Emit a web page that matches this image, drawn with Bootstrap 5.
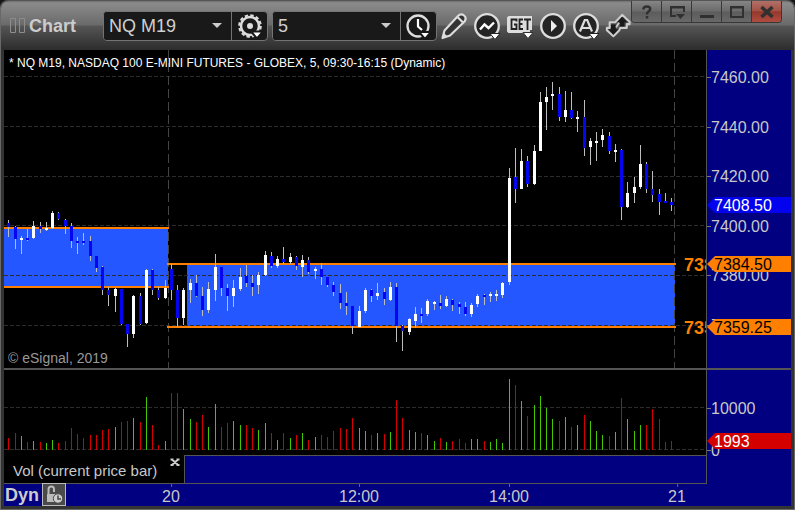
<!DOCTYPE html>
<html lang="en">
<head>
<meta charset="utf-8">
<meta name="viewport" content="width=device-width, initial-scale=1">
<title>Chart - NQ M19</title>
<link href="https://cdn.jsdelivr.net/npm/bootstrap@5.3.0/dist/css/bootstrap.min.css" rel="stylesheet">
<style>
  :root { --navy: #000080; --rule: #555; --axis: 85px; }
  html { background: #161616; }
  body { font-family: "Liberation Sans", Arial, sans-serif; font-size: 16px; line-height: 18px; color: #c8c8c8; background: #161616; }
  .app-window { background: #333; border: solid #686868; border-width: 0 1px 1px 1px; border-radius: 8px 8px 0 0; }
  .title-bar { height: 50px; padding-left: 9px; border-top: 1px solid #555; border-radius: 8px 8px 0 0;
    background: linear-gradient(#707070 0, #8b8b8b 2px, #6a6a6a 24px, #555 25px, #2e2e2e 48px); }
  .title-text { width: 73px; font-size: 18px; font-weight: bold; color: #ccc; padding-left: 3px; }
  .combo { height: 30px; border: 1px solid #747474; border-radius: 4px; background: #191919; }
  .combo .form-select { width: 127px; border: 0; border-radius: 3px 0 0 3px; padding: 0 24px 0 5px; font-size: 18px; line-height: 28px; color: #d0d0d0; background-color: #191919;
    background-image: url("data:image/svg+xml,%3Csvg xmlns='http://www.w3.org/2000/svg' viewBox='0 0 10 5'%3E%3Cpath d='M0 0h10L5 5z' fill='%23ccc'/%3E%3C/svg%3E");
    background-size: 10px 5px; background-position: right 9px center; }
  .combo .btn { width: 36px; border: 0; border-left: 1px solid #747474; border-radius: 0; }
  .tool { width: 33px; height: 30px; border: 0; }
  .tool-last { width: 29px; }
  .win-buttons { height: 22px; margin-right: 12px; border: 1px solid #383838; border-top: 0; border-radius: 0 0 4px 4px; overflow: hidden; }
  .win-buttons .btn { width: 30px; border: 0; border-right: 1px solid #383838; border-radius: 0; background: linear-gradient(#858585, #6b6b6b 48%, #5c5c5c 52%, #686868); }
  .win-buttons .btn:last-child { width: 29px; border-right: 0; background: linear-gradient(#b07068, #a55247 45%, #95382c 52%, #b04c40); }
  .frame-body { padding: 0 3px 3px; }
  .pane-price { flex: 318 1 0; min-height: 0; }
  .pane-volume { flex: 85 1 0; min-height: 0; }
  .plot { min-width: 0; background: #000; }
  .plot svg { position: absolute; inset: 0; width: 100%; height: 100%; }
  .axis { width: var(--axis); border-left: 1px solid var(--rule); background: var(--navy); }
  .splitter { height: 2px; background: #555; }
  .chart-title { top: 4px; left: 5px; font-size: 12px; color: #fff; }
  .copyright { left: 4px; bottom: 1px; font-size: 14px; color: #999; }
  .tick-label { left: 4px; transform: translateY(-50%); margin-top: 1px; }
  .tick-label::before { content: ""; position: absolute; left: -4px; top: 8px; width: 4px; height: 1px; background: #777; }
  .tag { left: 0; right: 0; height: 16px; padding-left: 7px; line-height: 17px; transform: translateY(-50%); clip-path: polygon(0 50%, 8px 0, 100% 0, 100% 100%, 8px 100%); }
  .tag-last { background: #0202ee; color: #fff; }
  .tag-level { background: #ff8000; color: #000; }
  .tag-volume { background: #d40000; color: #fff; }
  .level-label { right: 0; width: 22px; overflow: hidden; white-space: nowrap; font-size: 18px; font-weight: bold; color: #ff8000; transform: translateY(-50%); }
  .study-row { height: 28px; }
  .study-tab { width: 181px; padding: 0 4px 0 9px; font-size: 15px; background: #000; border-right: 1px solid var(--rule); }
  .study-tab .tab-close { width: 11px; height: 11px; margin-top: 2px; border: 0; }
  .study-space { border-top: 1px solid var(--rule); background: var(--navy); }
  .time-row { height: 23px; background: var(--navy); }
  .time-scale { border-top: 1px solid var(--rule); left: 0; right: 84px; top: 0; bottom: 0; }
  .time-label { top: 4px; transform: translateX(-50%); }
  .time-label::before { content: ""; position: absolute; left: 50%; top: -4px; width: 1px; height: 3px; background: #666; }
  .dyn { font-size: 18px; font-weight: bold; color: #ccc; padding: 3px 3px 0 1px; }
  .lock { width: 24px; height: 23px; border: 1px solid #bbb; border-radius: 0; background: #4a4a4a; }
  .btn svg { display: block; margin: auto; }
  .btn.tool-last svg { margin-right: 0; }
</style>
</head>
<body class="vh-100 overflow-hidden">
<div class="app-window d-flex flex-column h-100">
  <header class="title-bar d-flex align-items-center flex-shrink-0">
    <svg class="flex-shrink-0" width="16" height="16" fill="none" stroke="#8d8d8d" aria-hidden="true"><path d="M.5.5h5v14h-5zM9.500.5h5v14h-5z"/></svg>
    <div class="title-text flex-shrink-0 text-nowrap">Chart</div>
    <div class="combo d-flex flex-shrink-0 ms-1 me-1">
      <select class="form-select" aria-label="Symbol"><option>NQ M19</option></select>
      <button class="btn p-0" type="button" aria-label="Symbol settings">
        <svg width="28" height="28" viewBox="0 0 28 28"><circle cx="14" cy="14" r="9" fill="none" stroke="#ddd" stroke-width="2.500"/><circle cx="14" cy="14" r="10.800" fill="none" stroke="#ddd" stroke-width="2" stroke-dasharray="3.400 2.255"/><circle cx="14" cy="14" r="3" fill="#ddd"/><path d="M15 19.500h12l-6 7z" fill="#fff" stroke="#191919" stroke-width="2"/></svg>
      </button>
    </div>
    <div class="combo d-flex flex-shrink-0">
      <select class="form-select" aria-label="Interval"><option>5</option></select>
      <button class="btn p-0" type="button" aria-label="Time template">
        <svg width="28" height="28" viewBox="0 0 28 28"><circle cx="13" cy="14" r="10.500" fill="none" stroke="#ddd" stroke-width="2.300"/><path d="M13 7v7.500l4 3.500" fill="none" stroke="#fff" stroke-width="2.200"/><path d="M14 20h12l-6 7z" fill="#fff" stroke="#191919" stroke-width="2"/></svg>
      </button>
    </div>
    <div class="d-flex flex-shrink-0">
      <button class="tool btn p-0" type="button" aria-label="Draw">
        <svg width="28" height="28" viewBox="0 0 28 28"><path d="M2.500 26 4.500 18.500 18 4Q21 1 24 3.500T24.500 9.500L10 23.500zM17.500 5l5.500 5.500" fill="#333" stroke="#ddd" stroke-width="2.200" stroke-linejoin="round"/><path d="m2.500 26 1.500-5 3.500 3.500z" fill="#ddd"/></svg>
      </button>
      <button class="tool btn p-0" type="button" aria-label="Studies">
        <svg width="28" height="28" viewBox="0 0 28 28"><circle cx="14" cy="14" r="11.800" fill="#242424" stroke="#ddd" stroke-width="2.300"/><path d="m7 17.500 4.500-5 4 3.500 5.500-5.500" fill="none" stroke="#fff" stroke-width="2.400"/><path d="M17 21.500h10l-5 6z" fill="#fff" stroke="#222"/></svg>
      </button>
      <button class="tool btn p-0" type="button" aria-label="Get studies">
        <svg width="28" height="28" viewBox="0 0 28 28"><path d="M2.500 4H26v14h-2v2h-7v1H2.500L1 19.500v-14z" fill="#ddd"/><path d="M10.500 9.500V7.500H5.500v9.500h5V12.500H8M17 7.500H13.500v9.500H17M13.500 12h3M18 7.500h7M21.500 7.500V18" fill="none" stroke="#222" stroke-width="1.800"/><path d="M17 20.500h10l-5 6z" fill="#fff" stroke="#333"/></svg>
      </button>
      <button class="tool btn p-0" type="button" aria-label="Playback">
        <svg width="28" height="28" viewBox="0 0 28 28"><circle cx="14" cy="14" r="11.800" fill="#242424" stroke="#ddd" stroke-width="2.300"/><path d="M12 8v12l6-6z" fill="#eee"/></svg>
      </button>
      <button class="tool btn p-0" type="button" aria-label="Alerts">
        <svg width="28" height="28" viewBox="0 0 28 28"><circle cx="14" cy="14" r="11.800" fill="#242424" stroke="#ddd" stroke-width="2.300"/><path d="M8 19.500 12.800 8h2.400L20 19.500M10 16h8" fill="none" stroke="#ddd" stroke-width="2.200"/><path d="M17 21.500h10l-5 6z" fill="#fff" stroke="#222"/></svg>
      </button>
      <button class="tool tool-last btn p-0" type="button" aria-label="Link">
        <svg width="26" height="26" viewBox="0 1 28 28"><path d="M11.500 10.500 18.500 3 26.500 10.500V13H23.500V17H16.500L15.500 19.500 9 26 2 19.500V17H5V11H11z" fill="#555" stroke="#ccc" stroke-width="2.200" stroke-linejoin="round"/><path d="M18.500 5 24 11H21v4.500h-5V11h-3zM9 24.500 3.500 18.500h3v-5h5v5h3z" fill="#1a1a1a"/><path d="m12 16.500 3-5" fill="none" stroke="#ccc" stroke-width="2"/></svg>
      </button>
    </div>
    <div class="win-buttons d-flex flex-shrink-0 ms-auto align-self-start">
      <button class="btn p-0" type="button" aria-label="Help"><svg width="14" height="16" fill="none" stroke="#303030" stroke-width="2.500"><path d="M3.500 5.500V4.500Q4 2.500 7 2.500t3.200 2.500Q10.200 6.500 8.500 7.500T7 10.500M7 12v2.500"/></svg></button>
      <button class="btn p-0" type="button" aria-label="Window menu"><svg width="18" height="16" fill="none" stroke="#303030" stroke-width="2"><path d="M8 12H3V3h13v5M2 3.500h15"/><path d="M8 10h9l-4.500 5z" fill="#303030" stroke="none"/></svg></button>
      <button class="btn p-0" type="button" aria-label="Minimize"><svg width="16" height="16"><path d="M1 11h14v3H1z" fill="#303030"/></svg></button>
      <button class="btn p-0" type="button" aria-label="Maximize"><svg width="16" height="16" fill="none" stroke="#303030" stroke-width="2"><path d="M2 3h12v10H2zM1 3.500h14"/></svg></button>
      <button class="btn p-0" type="button" aria-label="Close"><svg width="16" height="16" stroke="#303030" stroke-width="3.500"><path d="m2.500 3 11 10M13.500 3l-11 10"/></svg></button>
    </div>
  </header>

  <main class="frame-body d-flex flex-column flex-grow-1">
    <section class="pane-price d-flex">
      <div class="plot flex-grow-1 position-relative overflow-hidden" id="pricePlot">
        <svg id="priceSvg" viewBox="4 50 702 318" preserveAspectRatio="none" shape-rendering="crispEdges" role="img" aria-label="NQ M19 five minute candles"></svg>
        <div class="chart-title position-absolute text-nowrap">* NQ M19, NASDAQ 100 E-MINI FUTURES - GLOBEX, 5, 09:30-16:15 (Dynamic)</div>
        <div class="copyright position-absolute">© eSignal, 2019</div>
      </div>
      <div class="axis flex-shrink-0 position-relative" id="priceAxis"></div>
    </section>
    <div class="splitter"></div>
    <section class="pane-volume d-flex">
      <div class="plot flex-grow-1 position-relative">
        <svg id="volumeSvg" viewBox="4 370 702 85" preserveAspectRatio="none" shape-rendering="crispEdges" role="img" aria-label="Volume"></svg>
      </div>
      <div class="axis flex-shrink-0 position-relative" id="volumeAxis"></div>
    </section>
    <div class="study-row d-flex flex-shrink-0">
      <div class="study-tab d-flex flex-shrink-0">
        <span class="align-self-center text-nowrap pt-1">Vol (current price bar)</span>
        <button class="tab-close btn p-0 ms-auto" type="button" aria-label="Remove study"><svg width="10" height="9" fill="none" stroke="#ccc" stroke-width="2"><path d="m2 1.500 6 5.500M8 1.500l-6 5.500M.5 1.500h3M6.500 1.500h3M.5 7h3M6.500 7h3"/></svg></button>
      </div>
      <div class="study-space flex-grow-1"></div>
      <div class="axis flex-shrink-0"></div>
    </div>
    <footer class="time-row d-flex flex-shrink-0 position-relative">
      <div class="time-scale position-absolute" id="timeScale"></div>
      <span class="dyn position-relative">Dyn</span>
      <button class="lock btn p-0 position-relative" type="button" aria-label="Lock time range"><svg width="20" height="20"><path d="M4.500 9V4.500q0-3 2.800-3T10 4.500V7" fill="none" stroke="#bbb" stroke-width="2"/><path d="M3 9h10v8H3z" fill="#bbb"/><circle cx="14" cy="13.500" r="4.700" fill="#ccc" stroke="#4a4a4a"/><path d="M14 10.500v3.500h3" fill="none" stroke="#444" stroke-width="1.500"/></svg></button>
    </footer>
  </main>
</div>

<script>
// Each bar: x, high, low, body top, body bottom, body colour (w = up, b = down)
const bars = `8 220 237 223 227 b;15 226 249 227 239 b;21 236 254 238 240 w;27 229 241 238 240 b;33 221 239 226 238 w;40 222 233 226 229 b;46 222 231 228 230 w;52 211 229 213 228 w;58 212 220 213 219 b;65 219 234 220 226 b;71 223 248 226 241 b;77 237 254 241 243 b;83 233 245 241 243 b;90 236 261 241 256 b;96 256 272 256 268 b;102 266 295 267 290 b;108 287 306 290 295 b;115 288 312 289 296 w;121 289 325 289 324 b;127 324 347 324 334 b;133 295 338 296 334 w;140 293 325 296 324 b;146 269 324 270 323 w;152 269 295 270 290 b;158 287 300 290 298 b;165 280 299 288 298 w;171 264 300 269 290 b;177 285 327 290 318 b;183 288 325 290 318 w;190 279 303 283 290 w;196 275 297 283 296 b;202 287 316 296 310 b;208 282 313 289 310 w;215 254 301 267 290 w;221 267 296 267 288 b;227 284 311 288 296 b;233 280 307 288 296 w;240 268 291 277 289 w;246 265 287 276 283 b;252 275 296 283 287 b;258 272 294 275 285 w;265 251 276 255 275 w;271 252 268 256 266 b;277 256 268 259 266 w;283 247 264 259 262 b;290 253 264 257 262 w;296 256 270 257 266 b;302 255 277 260 267 w;308 257 274 260 272 b;315 267 279 269 271 w;321 263 285 269 277 b;327 277 287 277 285 b;333 282 296 285 292 b;340 284 309 293 303 b;346 292 315 303 306 b;352 306 334 306 326 b;359 306 327 311 327 w;365 288 313 290 311 w;371 289 302 290 296 b;377 283 300 293 296 w;384 288 305 292 299 b;390 282 301 287 300 w;396 283 342 287 326 b;402 325 351 326 331 b;409 318 335 319 332 w;415 307 328 314 321 w;421 308 323 314 316 b;427 299 316 301 314 w;434 301 310 302 304 w;440 295 309 303 306 b;446 296 307 299 306 w;452 299 311 300 305 b;459 302 314 304 307 b;465 302 316 307 314 b;471 303 317 305 314 w;477 294 307 296 304 w;484 294 305 295 297 b;490 292 302 294 296 w;496 290 301 294 296 w;502 282 298 283 295 w;509 168 285 178 282 w;515 148 203 177 189 b;521 149 189 161 189 w;527 156 187 161 184 b;534 145 185 151 184 w;540 92 151 102 151 w;546 87 130 97 102 w;552 82 110 94 96 w;559 87 121 94 117 b;565 91 122 110 117 w;571 92 119 110 118 b;577 111 132 117 119 w;584 100 156 117 148 b;590 138 165 141 147 w;596 132 161 141 143 w;602 129 147 135 140 w;609 132 154 136 151 b;615 144 162 150 152 w;621 149 220 150 207 b;627 182 208 193 207 w;634 177 203 187 193 w;640 145 189 164 187 w;646 162 193 164 189 b;652 171 202 189 195 b;659 189 215 194 202 b;665 193 203 201 203 b;671 198 211 202 205 b`
  .split(";").map(s => s.split(" "));
// Top of each volume bar and its colour (r / g), in the order of the bars above
const volumes = "438r 433r 436g 442r 441g 442r 443g 440g 443r 441r 428r 434r 438r 435r 435r 430r 429r 427g 422r 421r 418g 422r 397g 425r 445r 441g 393r 393r 409g 419g 422r 415r 427g 404g 427r 423r 421g 425g 425r 428r 430g 423g 433r 440g 433r 438g 435r 433g 440r 437g 435r 437r 431r 428r 429r 418r 428g 431g 435r 433g 434r 432g 400r 418r 430g 432g 433r 435g 441g 438r 442g 441r 439r 443r 439g 439g 441r 442g 439g 443g 379g 385r 401g 416r 405g 396g 408g 419g 421r 417g 427r 425g 415r 421g 431g 435g 436r 432g 398r 419g 431g 425g 425r 409r 419r 442r 441r".split(" ");

const rect = (x, y, w, h, c) => `<rect x="${x}" y="${y}" width="${w}" height="${h}" fill="${c}"/>`;
const gridH = y => `<path d="M4 ${y + .5}H706" stroke="#2c2c2c" stroke-dasharray="4 2"/>`;

let s = [76, 126, 176, 225].map(gridH).join("");
s += rect(4, 229, 164, 57, "#2457ff") + rect(187, 265, 488, 61, "#2457ff");
s += gridH(275) + gridH(325);
s += [168, 674].map(x => `<path d="M${x + .5} 50V368" stroke="#444" stroke-dasharray="9 4"/>`).join("");
s += rect(4, 227, 165, 2, "#ff8000") + rect(4, 286, 165, 2, "#ff8000") + rect(167, 263, 509, 2, "#ff8000") + rect(167, 326, 509, 2, "#ff8000");
for (const [x, hi, lo, top, bottom, c] of bars)
  s += rect(x, hi, 1, lo - hi, "#bdbdbd") + rect(x - 1, top, 3, bottom - top, c === "w" ? "#fff" : "#0505f0");
document.getElementById("priceSvg").innerHTML = s;

let v = gridH(407) + gridH(449);
volumes.forEach((item, i) => {
  const y = parseInt(item, 10);
  v += rect(bars[i][0], y, 1, 450 - y, item.endsWith("r") ? "#d40000" : "#41c800");
});
document.getElementById("volumeSvg").innerHTML = v;

const place = (host, cls, text, pos, side = "top") =>
  document.getElementById(host).insertAdjacentHTML("beforeend", `<div class="${cls} position-absolute" style="${side}:${pos * 100}%">${text}</div>`);
const priceY = y => (y - 50) / 318, volumeY = y => (y - 370) / 85;
[["7460.00", 77], ["7440.00", 127], ["7420.00", 176], ["7400.00", 226], ["7380.00", 275], ["7360.00", 325]]
  .forEach(([t, y]) => place("priceAxis", "tick-label", t, priceY(y)));
place("priceAxis", "tag tag-last", "7408.50", priceY(205));
[["7384.50", 264], ["7359.25", 327]].forEach(([t, y]) => {
  place("priceAxis", "tag tag-level", t, priceY(y));
  place("pricePlot", "level-label", t, priceY(y + 1));
});
place("volumeAxis", "tick-label", "10000", volumeY(408));
place("volumeAxis", "tick-label", "0", volumeY(450));
place("volumeAxis", "tag tag-volume", "1993", volumeY(441));
[["20", 171], ["12:00", 359], ["14:00", 509], ["21", 677]]
  .forEach(([t, x]) => place("timeScale", "time-label", t, (x - 4) / 703, "left"));
</script>
<script src="https://cdn.jsdelivr.net/npm/bootstrap@5.3.0/dist/js/bootstrap.bundle.min.js"></script>
</body>
</html>
